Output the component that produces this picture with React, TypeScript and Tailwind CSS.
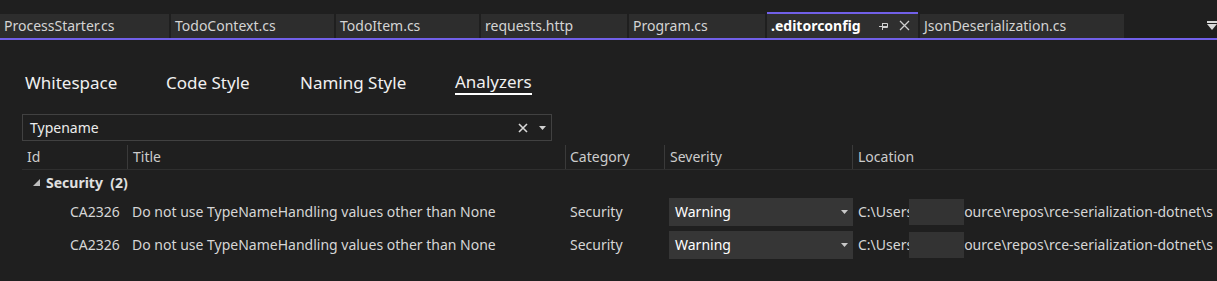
const TABS = [
  { name: 'ProcessStarter.cs', w: 'w-[169px]' },
  { name: 'TodoContext.cs', w: 'w-[163px]' },
  { name: 'TodoItem.cs', w: 'w-[143px]' },
  { name: 'requests.http', w: 'w-[146px]' },
  { name: 'Program.cs', w: 'w-[136px]' },
]

const ROWS = [
  { id: 'CA2326', title: 'Do not use TypeNameHandling values other than None', category: 'Security', severity: 'Warning' },
  { id: 'CA2326', title: 'Do not use TypeNameHandling values other than None', category: 'Security', severity: 'Warning' },
]

const Caret = ({ className = '' }: { className?: string }) => (
  <svg width="7" height="4" viewBox="0 0 7 4" className={className}>
    <path d="M0 0h7L3.5 4z" fill="currentColor" />
  </svg>
)

export default function App() {
  return (
    <div
      className="w-[1217px] h-[281px] overflow-hidden bg-[#1f1f1f] text-[#d6d6d6]"
      style={{ fontFamily: '"Noto Sans", "Open Sans", sans-serif' }}
    >
      {/* Document tabs */}
      <div className="relative pt-[12px]">
        <div className="flex items-end gap-[2px] h-[26px]">
          {TABS.map(t => (
            <div key={t.name} className={`${t.w} h-[24px] bg-[#2d2d2d] flex items-center pl-[4px] pb-[1px] text-[14px] text-[#d4d4d4] whitespace-nowrap overflow-hidden`}>
              {t.name}
            </div>
          ))}
          <div className="w-[151px] h-[26px] bg-[#2f2f2f] border-t-2 border-[#7160e8] flex items-center pl-[4px] pr-[8px] pb-[1px] text-[14px] font-bold text-white">
            <span className="flex-1">.editorconfig</span>
            <svg width="10" height="8" viewBox="0 0 10 8" className="text-[#cfcfcf] mr-[10px]">
              <path d="M0 4.5h3M3.5 1v7M3.5 1.5h5v4h-5M3.5 4.5h5" stroke="currentColor" strokeWidth="1" fill="none" />
            </svg>
            <svg width="11" height="11" viewBox="0 0 11 11" className="text-[#cfcfcf]">
              <path d="M1 1l9 9M10 1l-9 9" stroke="currentColor" strokeWidth="1.3" />
            </svg>
          </div>
          <div className="w-[204px] h-[24px] bg-[#2d2d2d] flex items-center pl-[4px] pb-[1px] text-[14px] text-[#d4d4d4]">
            JsonDeserialization.cs
          </div>
        </div>
        <div className="h-[2px] bg-[#7160e8]" />
        <div className="absolute right-0 top-[21px] w-[10px] flex flex-col items-center text-[#d8d8d8]">
          <div className="w-[10px] h-[2px] bg-current" />
          <svg width="10" height="6" viewBox="0 0 10 6" className="mt-[1px]">
            <path d="M0 0h10L5 6z" fill="currentColor" />
          </svg>
        </div>
      </div>

      {/* Settings sub-tabs */}
      <div className="flex items-end mt-[30px] pl-[25px] text-[17px] text-[#f0f0f0] leading-[24px]">
        <span className="w-[141px]">Whitespace</span>
        <span className="w-[134px]">Code Style</span>
        <span className="w-[155px]">Naming Style</span>
        <span className="border-b-2 border-white leading-[23px]">Analyzers</span>
      </div>

      {/* Search */}
      <div className="ml-[22px] mt-[19px] w-[530px] h-[27px] border border-[#414141] flex items-center pl-[7px] pr-[5px] text-[14px] text-[#ececec]">
        <span className="flex-1">Typename</span>
        <svg width="10" height="10" viewBox="0 0 10 10" className="text-[#d8d8d8] mr-[11px]">
          <path d="M1 1l8 8M9 1l-8 8" stroke="currentColor" strokeWidth="1.6" />
        </svg>
        <Caret className="text-[#d0d0d0]" />
      </div>

      {/* Analyzer table */}
      <div className="ml-[22px] text-[14px]">
        <div className="grid grid-cols-[105px_438px_99px_188px_1fr] h-[29px] pt-[3px] border-b border-[#2f2f2f] items-center text-[#cccccc]">
          <div className="pl-[5px]">Id</div>
          <div className="border-l border-[#3a3a3a] h-[24px] flex items-center pl-[5px]">Title</div>
          <div className="border-l border-[#3a3a3a] h-[24px] flex items-center pl-[4px]">Category</div>
          <div className="border-l border-[#3a3a3a] h-[24px] flex items-center pl-[5px]">Severity</div>
          <div className="border-l border-[#3a3a3a] h-[24px] flex items-center pl-[5px]">Location</div>
        </div>

        <div className="h-[25px] flex items-center pl-[11px] gap-[6px] text-[#e0e0e0] font-bold">
          <svg width="7" height="7" viewBox="0 0 7 7" className="text-[#bdbdbd]">
            <path d="M7 0v7H0z" fill="currentColor" />
          </svg>
          <span className="whitespace-pre">Security  (2)</span>
        </div>

        {ROWS.map((r, i) => (
          <div key={i} className="grid grid-cols-[105px_438px_99px_188px_1fr] h-[33px] items-center whitespace-nowrap">
            <div className="pl-[48px]">{r.id}</div>
            <div className="pl-[5px]">{r.title}</div>
            <div className="pl-[5px]">{r.category}</div>
            <div className="pl-[5px]">
              <div className="w-[184px] h-[28px] bg-[#363636] flex items-center pl-[6px] pr-[5px] text-white">
                <span className="flex-1">{r.severity}</span>
                <Caret className="text-[#c8c8c8]" />
              </div>
            </div>
            <div className="pl-[6px] flex items-center overflow-hidden">
              <span className="shrink-0">C:\Users</span>
              <span className="shrink-0 inline-block w-[55px] h-[26px] bg-[#333333] -ml-[4px]" />
              <span className="shrink-0">ource\repos\rce-serialization-dotnet\s</span>
            </div>
          </div>
        ))}
      </div>
    </div>
  )
}
